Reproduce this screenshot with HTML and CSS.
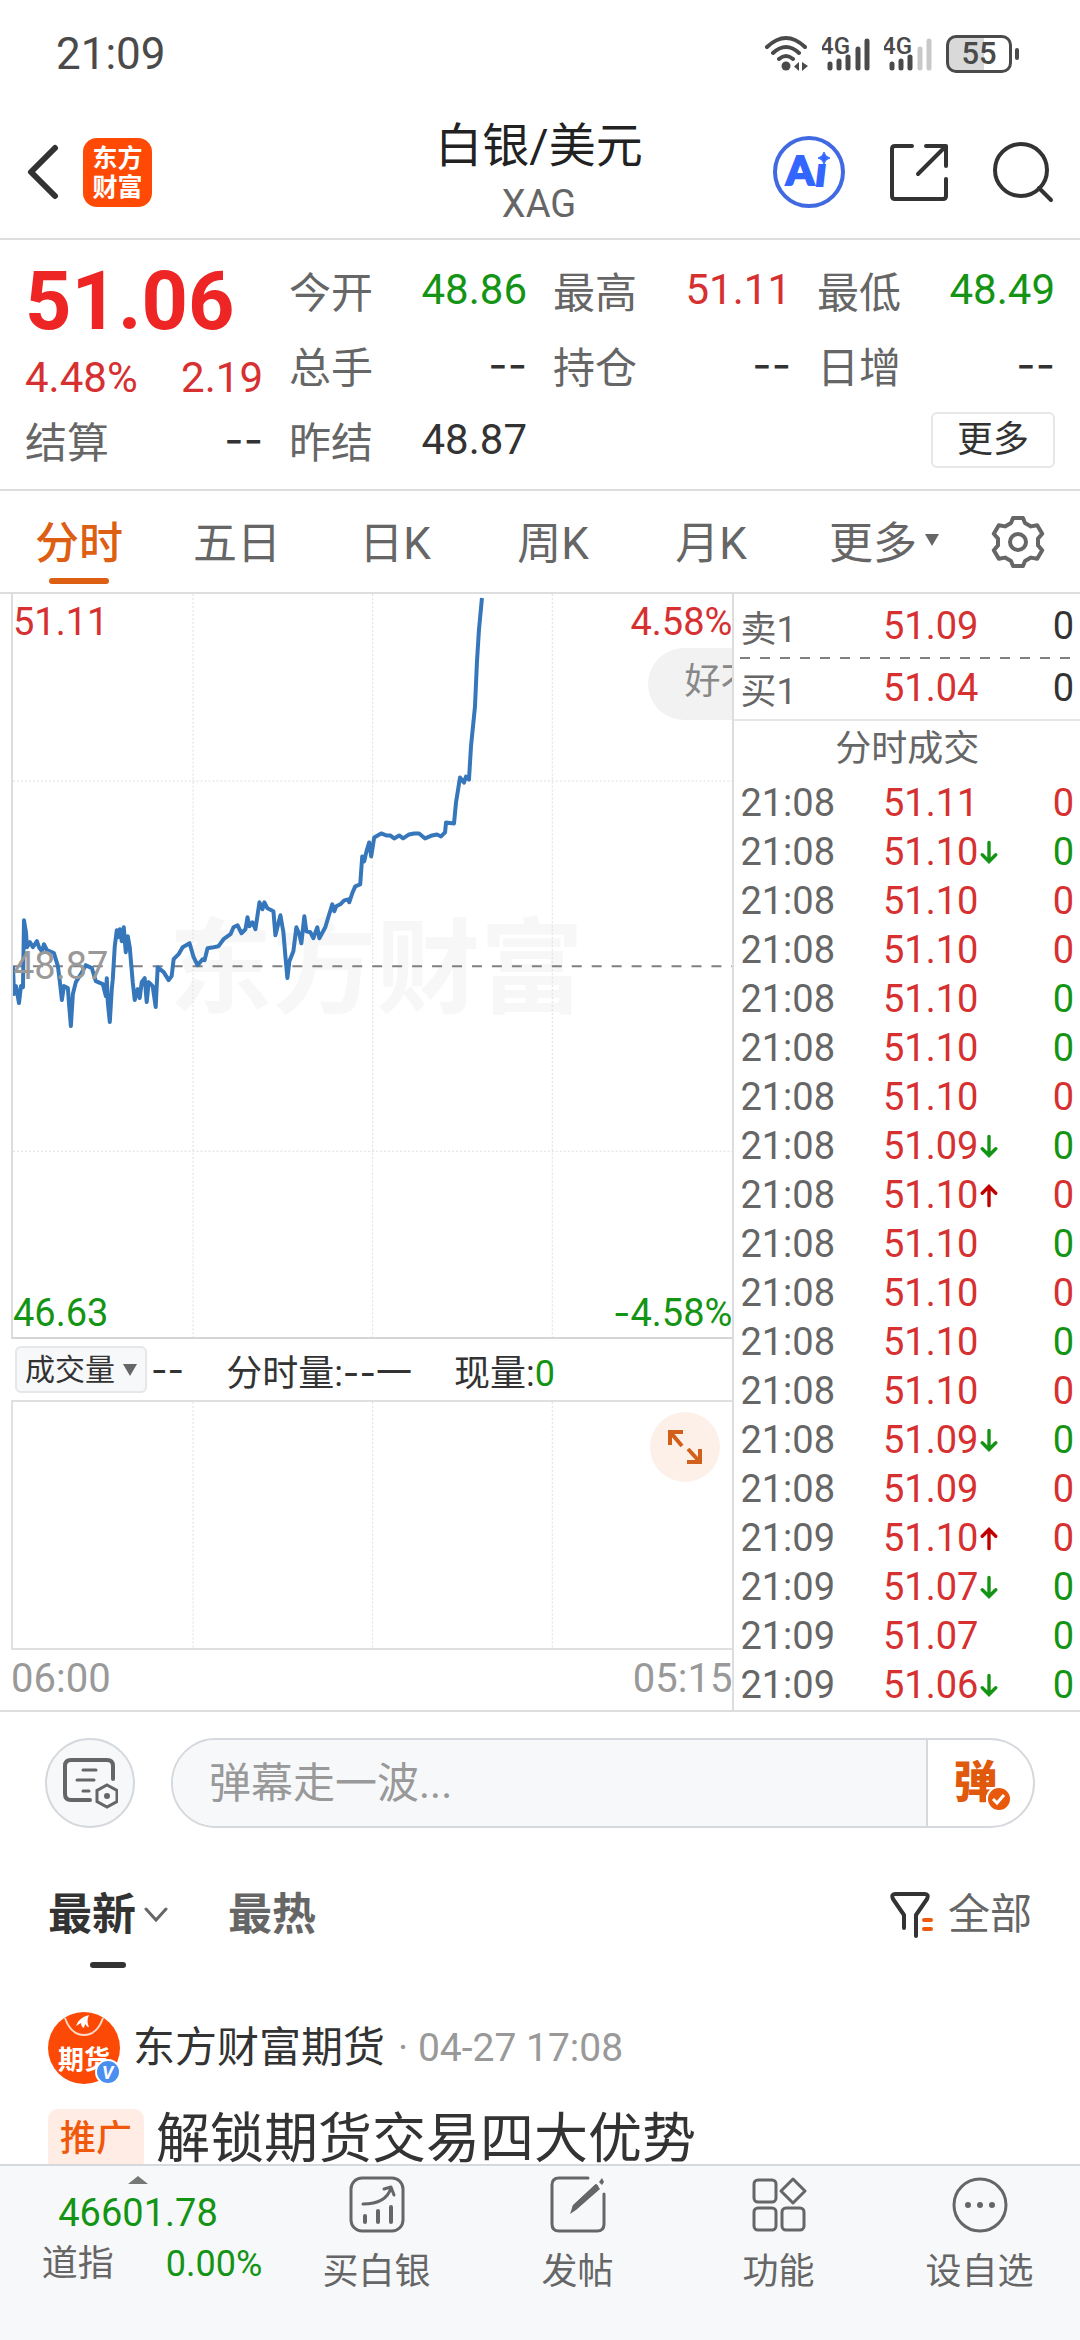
FILE: index.html
```html
<!DOCTYPE html>
<html lang="zh-CN">
<head>
    <meta charset="UTF-8">
    <meta name="viewport" content="width=device-width, initial-scale=1.0">
    <title>白银/美元 XAG</title>
    <link rel="stylesheet" href="styles.css">
</head>
<body>

    <div class="status-bar">
        <span class="clock">21:09</span>
        <div class="status-icons">
            <svg width="46" height="38" viewBox="0 0 46 38" fill="none" stroke="#4a4a4a" stroke-width="4" stroke-linecap="round">
                <path d="M3 12Q22 -6 41 12M9 18Q22 6 35 18M15 24Q22 18 29 24"/>
                <circle cx="22" cy="31" r="4.500" fill="#4a4a4a" stroke="none"/>
                <path d="M35 27v9l-5-4.500zM38 27v9l6-5z" fill="#4a4a4a" stroke="none"/>
            </svg>
            <svg width="50" height="38" viewBox="0 0 50 38" stroke="#4a4a4a" stroke-width="5" stroke-linecap="round">
                <text class="net" x="-2" y="19">4G</text>
                <path d="M8 29v4M17 26v7M26 22v11M36 14v19M45 6v27"/>
            </svg>
            <svg width="50" height="38" viewBox="0 0 50 38" stroke="#4a4a4a" stroke-width="5" stroke-linecap="round">
                <text class="net" x="-2" y="19">4G</text>
                <path d="M8 29v4M17 26v7M26 22v11"/>
                <path d="M36 14v19M45 6v27" stroke="#c9c9c9"/>
            </svg>
            <span class="battery">55</span>
        </div>
    </div>

    <header class="header">
        <div class="header-side">
            <button class="icon-btn" aria-label="返回">
                <svg width="36" height="60" viewBox="0 0 36 60" fill="none" stroke="#333" stroke-width="6" stroke-linecap="round" stroke-linejoin="round"><path d="M31 6L7 30l24 24"/></svg>
            </button>
            <a href="#" class="logo">东方<br>财富</a>
        </div>
        <div class="header-title">
            <h1>白银/美元</h1>
            <p>XAG</p>
        </div>
        <div class="header-side header-actions">
            <button class="icon-btn" aria-label="智能助手">
                <svg width="74" height="74" viewBox="0 0 74 74">
                    <circle cx="37" cy="37" r="34" fill="none" stroke="#4169e1" stroke-width="4"/>
                    <text class="ai" x="14" y="50">A</text>
                    <text class="ai ai-stem" x="44" y="51">ı</text>
                    <path d="M52 17q1 5 6 6q-5 1-6 6q-1-5-6-6q5-1 6-6z" fill="#3366ff" stroke="#3366ff"/>
                </svg>
            </button>
            <button class="icon-btn" aria-label="分享">
                <svg width="62" height="62" viewBox="0 0 62 62" fill="none" stroke="#333" stroke-width="4" stroke-linecap="round" stroke-linejoin="round">
                    <path d="M24 5H7Q4 5 4 8v47q0 3 3 3h48q3 0 3-3V38M38 5h20v20M58 5L30 33"/>
                </svg>
            </button>
            <button class="icon-btn" aria-label="搜索">
                <svg width="62" height="62" viewBox="0 0 62 62" fill="none" stroke="#333" stroke-width="4" stroke-linecap="round">
                    <circle cx="29" cy="29" r="26"/><path d="M47 47l12 12"/>
                </svg>
            </button>
        </div>
    </header>

    <section class="quote">
        <div class="quote-price">
            <strong>51.06</strong>
            <div class="quote-change"><span>4.48%</span><span>2.19</span></div>
        </div>
        <div class="quote-item"><span>今开</span><b class="down">48.86</b></div>
        <div class="quote-item"><span>最高</span><b class="up">51.11</b></div>
        <div class="quote-item"><span>最低</span><b class="down">48.49</b></div>
        <div class="quote-item"><span>总手</span><b class="dash">--</b></div>
        <div class="quote-item"><span>持仓</span><b class="dash">--</b></div>
        <div class="quote-item"><span>日增</span><b class="dash">--</b></div>
        <div class="quote-item"><span>结算</span><b class="dash">--</b></div>
        <div class="quote-item"><span>昨结</span><b>48.87</b></div>
        <button class="more-btn">更多</button>
    </section>

    <nav class="period-tabs">
        <a href="#" class="active">分时</a>
        <a href="#">五日</a>
        <a href="#">日K</a>
        <a href="#">周K</a>
        <a href="#">月K</a>
        <a href="#">更多<i class="caret"></i></a>
        <button class="icon-btn" aria-label="设置">
            <svg width="56" height="56" viewBox="-28 -28 56 56" fill="none" stroke="#666" stroke-width="4" stroke-linejoin="round">
                <path d="M-5-24L5-24L7-19L13-15.600L19.200-16.800L24.200-8.200L20-3.400L20 3.400L24.200 8.200L19.200 16.800L13 15.600L7 19L5 24L-5 24L-7 19L-13 15.600L-19.200 16.800L-24.200 8.200L-20 3.400L-20-3.400L-24.200-8.200L-19.200-16.800L-13-15.600L-7-19Z"/>
                <circle r="8"/>
            </svg>
        </button>
    </nav>

    <main class="market">
        <div class="charts">
            <div class="chart">
                <svg viewBox="0 0 721 745" fill="none">
                    <text class="watermark" x="156" y="412">东方财富</text>
                    <path d="M180.500 0V745M360.500 0V745M540.500 0V745M0 187.500H721M0 558.500H721" stroke="#ddd" stroke-dasharray="2 2"/>
                    <path d="M0 373H721" stroke="#808080" stroke-width="2" stroke-dasharray="10 10"/>
                    <path class="price-line" d="M0 373L1 401L3 393L6 410L8 393L10 394L11 327L13 339L14 354L17 349L20 354L24 348L26 354L29 358L31 351L34 357L41 360L45 373L47 389L49 407L51 393L55 395L56 409L58 433L60 401L63 389L68 381L73 372L79 375L83 388L90 391L93 403L94 385L95 409L97 429L99 396L100 386L102 353L104 337L105 344L107 336L109 348L111 334L113 359L115 343L117 354L120 389L122 407L125 396L127 405L129 389L132 385L134 409L136 389L140 393L143 414L145 374L151 379L156 387L159 383L161 366L166 361L170 354L177 350L181 364L185 372L190 366L192 367L195 355L201 354L206 353L211 346L218 341L221 334L225 332L229 340L233 336L235 324L237 333L240 329L243 336L247 309L250 316L252 309L255 315L261 318L263 342L268 322L271 339L273 363L275 385L277 368L281 358L284 334L287 341L289 350L292 323L294 338L298 339L301 345L305 334L307 345L313 334L316 324L320 311L322 318L324 313L328 311L332 307L336 306L337 309L340 300L343 293L348 291L350 263L352 268L354 259L357 249L359 263L362 244L369 240L374 242L378 242L382 245L387 242L391 245L397 241L402 240L407 240L413 245L420 242L425 241L429 243L433 239L434 229L442 230L444 209L448 184L452 189L454 183L457 186L459 153L463 113L465 68L467 36L470 4"/>
                </svg>
                <span class="mark top-left up">51.11</span>
                <span class="mark top-right up">4.58%</span>
                <span class="mark mid-left">48.87</span>
                <span class="mark bottom-left down">46.63</span>
                <span class="mark bottom-right down"><span class="dash">-</span>4.58%</span>
                <span class="bullet">好不</span>
            </div>
            <div class="volume-bar">
                <label class="volume-select">
                    <select aria-label="指标"><option>成交量</option></select>
                    <i class="caret"></i>
                </label>
                <span class="dash">--</span>
                <span class="volume-now">分时量:<span class="dash">--</span>一</span>
                <span>现量:<span class="down">0</span></span>
            </div>
            <div class="volume-chart">
                <svg viewBox="0 0 721 246" fill="none">
                    <path d="M180.500 0V246M360.500 0V246M540.500 0V246" stroke="#ddd" stroke-dasharray="2 2"/>
                </svg>
                <button class="expand-btn" aria-label="全屏">
                    <svg width="36" height="36" viewBox="0 0 36 36" fill="none" stroke="#d2601a" stroke-width="4"><path d="M3 16V3h13M4 4l11 13M33 20v13H20M32 32L21 20"/></svg>
                </button>
            </div>
            <div class="time-axis"><span>06:00</span><span>05:15</span></div>
        </div>

        <div class="trades">
            <table class="book">
                <tr><th>卖1</th><td class="up">51.09</td><td>0</td></tr>
                <tr><th>买1</th><td class="up">51.04</td><td>0</td></tr>
            </table>
            <table class="ticks">
                <caption>分时成交</caption>
                <tr><td>21:08</td><td>51.11</td><td class="up">0</td></tr>
                <tr><td>21:08</td><td>51.10<svg class="arrow down"><use href="#arrow-down"/></svg></td><td class="down">0</td></tr>
                <tr><td>21:08</td><td>51.10</td><td class="up">0</td></tr>
                <tr><td>21:08</td><td>51.10</td><td class="up">0</td></tr>
                <tr><td>21:08</td><td>51.10</td><td class="down">0</td></tr>
                <tr><td>21:08</td><td>51.10</td><td class="down">0</td></tr>
                <tr><td>21:08</td><td>51.10</td><td class="up">0</td></tr>
                <tr><td>21:08</td><td>51.09<svg class="arrow down"><use href="#arrow-down"/></svg></td><td class="down">0</td></tr>
                <tr><td>21:08</td><td>51.10<svg class="arrow rise"><use href="#arrow-up"/></svg></td><td class="up">0</td></tr>
                <tr><td>21:08</td><td>51.10</td><td class="down">0</td></tr>
                <tr><td>21:08</td><td>51.10</td><td class="up">0</td></tr>
                <tr><td>21:08</td><td>51.10</td><td class="down">0</td></tr>
                <tr><td>21:08</td><td>51.10</td><td class="up">0</td></tr>
                <tr><td>21:08</td><td>51.09<svg class="arrow down"><use href="#arrow-down"/></svg></td><td class="down">0</td></tr>
                <tr><td>21:08</td><td>51.09</td><td class="up">0</td></tr>
                <tr><td>21:09</td><td>51.10<svg class="arrow rise"><use href="#arrow-up"/></svg></td><td class="up">0</td></tr>
                <tr><td>21:09</td><td>51.07<svg class="arrow down"><use href="#arrow-down"/></svg></td><td class="down">0</td></tr>
                <tr><td>21:09</td><td>51.07</td><td class="down">0</td></tr>
                <tr><td>21:09</td><td>51.06<svg class="arrow down"><use href="#arrow-down"/></svg></td><td class="down">0</td></tr>
            </table>
        </div>
    </main>

    <form class="danmu">
        <button type="button" class="danmu-set" aria-label="弹幕设置">
            <svg width="56" height="52" viewBox="0 0 56 52" fill="none" stroke="#666" stroke-width="4" stroke-linecap="round">
                <path d="M51 22V9q0-6-6-6H9Q3 3 3 9v28q0 6 6 6h19"/>
                <path d="M21 13h13M15 23h17M21 34h6" stroke-width="3"/>
                <path d="M45 28l10 5.500v11L45 50l-10-5.500v-11z" stroke-width="3"/>
                <circle cx="45" cy="39" r="3" fill="#666" stroke="none"/>
            </svg>
        </button>
        <div class="danmu-box">
            <input type="text" placeholder="弹幕走一波..." aria-label="弹幕">
            <button type="button" class="danmu-toggle" aria-label="弹幕开关">弹
                <svg width="26" height="26" viewBox="0 0 26 26"><circle cx="13" cy="13" r="12" fill="#e8590c" stroke="#fff" stroke-width="2"/><path d="M7 13l4 4 7-8" fill="none" stroke="#fff" stroke-width="3"/></svg>
            </button>
        </div>
    </form>

    <div class="feed-tabs">
        <a href="#" class="active">最新<svg width="24" height="16" viewBox="0 0 24 16" fill="none" stroke="#666" stroke-width="3" stroke-linecap="round"><path d="M2 2l10 11L22 2"/></svg></a>
        <a href="#">最热</a>
        <a href="#" class="filter">
            <svg width="44" height="48" viewBox="0 0 44 48" fill="none" stroke="#333" stroke-width="4" stroke-linecap="round" stroke-linejoin="round">
                <path d="M14 37V24L3 8Q1 3 5 3h30q4 0 2 5L26 24v21"/>
                <path d="M34 29h7M34 38h7" stroke="#f0590c"/>
            </svg>全部
        </a>
    </div>

    <article class="post">
        <div class="post-author">
            <span class="avatar">
                <svg width="72" height="72" viewBox="0 0 72 72">
                    <circle cx="36" cy="36" r="36" fill="#fc4a06"/>
                    <path d="M17 6q6 17 19 17T55 6" fill="none" stroke="#ffd9c8" stroke-width="2"/>
                    <path d="M41 3q-11 3-13 11l5-3q0 4 3 5q0-3 2-4q0 3 3 3q-3-6 0-12z" fill="#fff"/>
                    <text class="avatar-text" x="10" y="57">期货</text>
                    <circle cx="60" cy="60" r="12" fill="#4a8ef0" stroke="#fff" stroke-width="2"/>
                    <text class="avatar-v" x="54" y="67">V</text>
                </svg>
            </span>
            <span class="post-name">东方财富期货</span>
            <time>· 04-27 17:08</time>
        </div>
        <h2><span class="tag">推广</span>解锁期货交易四大优势</h2>
    </article>

    <footer class="bottom-nav">
        <a href="#" class="index">
            <i class="caret-up"></i>
            <span class="down">46601.78</span>
            <span class="index-row">道指<b class="down">0.00%</b></span>
        </a>
        <a href="#">
            <svg width="56" height="58" viewBox="0 0 56 58" fill="none" stroke="#666" stroke-width="3" stroke-linecap="round" stroke-linejoin="round">
                <rect x="2" y="2" width="52" height="53" rx="11"/>
                <path d="M14 28q23 0 28-16M35 13l7-2 3 8"/>
                <path d="M16 40v6M29 35v11M42 31v15" stroke-width="4"/>
            </svg>
            买白银
        </a>
        <a href="#">
            <svg width="56" height="58" viewBox="0 0 56 58" fill="none" stroke="#666" stroke-width="3" stroke-linecap="round">
                <path d="M38 2H9Q2 2 2 9v39q0 7 7 7h38q7 0 7-7V18"/>
                <path d="M20 38l3-9L46 8l4 5L26 34zM49 6l3-4 2 4-2 3z" fill="#666" stroke="none"/>
                <path d="M25 31L46 11" stroke-width="5"/>
            </svg>
            发帖
        </a>
        <a href="#">
            <svg width="56" height="58" viewBox="0 0 56 58" fill="none" stroke="#666" stroke-width="3" stroke-linejoin="round">
                <rect x="3" y="4" width="22" height="22" rx="4"/>
                <rect x="3" y="32" width="22" height="22" rx="4"/>
                <rect x="31" y="32" width="22" height="22" rx="4"/>
                <path d="M42 3l12 12-12 12-12-12z"/>
            </svg>
            功能
        </a>
        <a href="#">
            <svg width="56" height="58" viewBox="0 0 56 58" fill="none" stroke="#666" stroke-width="3">
                <circle cx="28" cy="29" r="26"/>
                <path d="M16 29h0M28 29h0M40 29h0" stroke-width="6" stroke-linecap="round"/>
            </svg>
            设自选
        </a>
    </footer>

    <!-- shared arrows of the trade list -->
    <svg width="0" height="0" class="defs">
        <symbol id="arrow-down" viewBox="0 0 16 22"><path d="M8 2v17M2 13l6 6 6-6"/></symbol>
        <symbol id="arrow-up" viewBox="0 0 16 22"><path d="M8 20V3M2 9l6-6 6 6"/></symbol>
    </svg>

</body>
</html>
```

FILE: styles.css
```css
* {
    margin: 0;
    padding: 0;
    box-sizing: border-box;
}

body {
    font-family: Roboto, "Noto Sans CJK SC", sans-serif;
    background: #fff;
    color: #333;
    font-size: 36px;
}

a {
    color: inherit;
    text-decoration: none;
}

button,
input,
select {
    font: inherit;
    color: inherit;
    background: none;
    border: none;
}

svg {
    display: block;
    flex: none;
}

.defs {
    position: absolute;
}

.icon-btn {
    display: flex;
}

.up {
    color: #d63031;
}

.down {
    color: #149414;
}

.dash {
    font-family: Inter, sans-serif;
}

.caret {
    border: 7px solid transparent;
    border-top: 12px solid #666;
    border-bottom: 0;
}

/* status bar */
.status-bar {
    display: flex;
    justify-content: space-between;
    align-items: center;
    height: 104px;
    padding: 4px 68px 0 56px;
    color: #4a4a4a;
}

.clock {
    font-size: 44px;
}

.status-icons {
    display: flex;
    align-items: center;
    gap: 12px;
}

.net {
    font-size: 24px;
    font-weight: 500;
    fill: #4a4a4a;
    stroke: none;
}

.battery {
    position: relative;
    width: 66px;
    height: 38px;
    border: 3px solid #4a4a4a;
    border-radius: 10px;
    background: linear-gradient(90deg, #d9d9d9 58%, #fff 58%);
    font-size: 31px;
    font-weight: 500;
    line-height: 32px;
    text-align: center;
}

.battery::after {
    content: "";
    position: absolute;
    right: -10px;
    top: 10px;
    width: 4px;
    height: 12px;
    border-radius: 2px;
    background: #4a4a4a;
}

/* header */
.header {
    display: grid;
    grid-template-columns: 1fr auto 1fr;
    align-items: center;
    height: 136px;
    padding: 2px 26px 0 24px;
    border-bottom: 2px solid #ddd;
}

.header-side {
    display: flex;
    align-items: center;
    gap: 23px;
}

.header-actions {
    justify-content: flex-end;
    gap: 42px;
}

.logo {
    width: 69px;
    height: 69px;
    padding-top: 6px;
    border-radius: 14px;
    background: #ff4a05;
    color: #fff;
    font-size: 25px;
    font-weight: 700;
    line-height: 29px;
    text-align: center;
}

.header-title {
    text-align: center;
}

.header-title h1 {
    font-size: 47px;
    font-weight: 400;
    line-height: 64px;
    color: #222;
}

.header-title p {
    font-size: 38px;
    line-height: 52px;
    color: #666;
}

.ai {
    font-family: Lato, sans-serif;
    font-size: 40px;
    font-weight: 900;
    fill: #3366ff;
    stroke: #3366ff;
    stroke-width: 2;
}

.ai-stem {
    font-style: italic;
}

/* quote */
.quote {
    display: grid;
    grid-template-columns: repeat(4, 1fr);
    grid-auto-rows: 75px;
    column-gap: 26px;
    padding: 12px 25px;
    border-bottom: 2px solid #ddd;
    font-size: 42px;
}

.quote-price {
    grid-row: span 2;
    color: #ee2525;
}

.quote-price strong {
    display: block;
    font-size: 81px;
    font-weight: 700;
    line-height: 100px;
}

.quote-change {
    display: flex;
    justify-content: space-between;
    line-height: 52px;
    color: #d63031;
}

.quote-item {
    display: flex;
    justify-content: space-between;
    align-items: center;
    color: #666;
}

.quote-item b {
    font-weight: 400;
}

.quote-item b:not(.up):not(.down) {
    color: #333;
}

.more-btn {
    grid-column: 4;
    justify-self: end;
    align-self: center;
    width: 124px;
    height: 56px;
    border: 2px solid #e5e7e9;
    border-radius: 6px;
    font-size: 36px;
    line-height: 48px;
}

/* period tabs */
.period-tabs {
    display: grid;
    grid-template-columns: repeat(5, 158fr) 188fr 102fr;
    align-items: center;
    height: 103px;
    border-bottom: 2px solid #ddd;
    color: #666;
    font-size: 44px;
}

.period-tabs a {
    position: relative;
    display: flex;
    justify-content: center;
    align-items: center;
    gap: 8px;
    height: 100%;
    padding-bottom: 4px;
}

.period-tabs .icon-btn {
    padding-left: 12px;
}

.period-tabs .active {
    color: #dc5f14;
    font-weight: 500;
}

.period-tabs .active::after {
    content: "";
    position: absolute;
    bottom: 8px;
    width: 60px;
    height: 6px;
    border-radius: 3px;
    background: #dc5f14;
}

/* charts */
.market {
    display: grid;
    grid-template-columns: 68% 32%;
    border-bottom: 2px solid #ddd;
}

.charts {
    padding-left: 11px;
    border-right: 2px solid #ddd;
}

.chart {
    position: relative;
    overflow: hidden;
    border-left: 2px solid #ddd;
    border-bottom: 2px solid #d5d5d5;
}

.chart svg,
.volume-chart > svg {
    width: 100%;
    height: auto;
}

.watermark {
    font-size: 104px;
    font-weight: 700;
    fill: #f7f7f7;
}

.price-line {
    stroke: #3676ba;
    stroke-width: 4;
    stroke-linejoin: round;
}

.mark {
    position: absolute;
    font-size: 38px;
    line-height: 48px;
}

.top-left {
    top: 4px;
    left: 0;
}

.top-right {
    top: 4px;
    right: 0;
}

.mid-left {
    top: 50%;
    left: 0;
    transform: translateY(-50%);
    color: #999;
}

.bottom-left {
    bottom: 0;
    left: 0;
}

.bottom-right {
    bottom: 0;
    right: 0;
}

/* running comment, cut by the chart edge */
.bullet {
    position: absolute;
    top: 54px;
    right: -24px;
    height: 72px;
    padding: 0 0 0 36px;
    border-radius: 36px 0 0 36px;
    background: #f2f2f2;
    color: #888;
    line-height: 68px;
}

.volume-bar {
    display: flex;
    align-items: center;
    gap: 4px;
    height: 61px;
    padding-left: 4px;
}

.volume-now {
    margin: 0 38px;
}

.volume-select {
    display: flex;
    align-items: center;
    gap: 8px;
    height: 47px;
    padding: 0 8px;
    border: 2px solid #e5e7e9;
    border-radius: 6px;
    background: #f7f8fa;
    font-size: 30px;
}

.volume-select select {
    appearance: none;
}

.volume-chart {
    position: relative;
    border: 2px solid #e0e0e0;
    border-right: 0;
}

.expand-btn {
    position: absolute;
    top: 10px;
    right: 12px;
    display: flex;
    justify-content: center;
    align-items: center;
    width: 70px;
    height: 70px;
    border-radius: 50%;
    background: #fdf0e9;
}

.time-axis {
    display: flex;
    justify-content: space-between;
    color: #999;
    font-size: 40px;
    line-height: 58px;
}

/* trade list */
.trades {
    font-size: 38px;
}

.trades table {
    width: 100%;
    border-collapse: collapse;
    table-layout: fixed;
}

.trades th,
.trades td {
    text-align: left;
    font-weight: 400;
}

.trades th:first-child,
.trades td:first-child {
    width: 43%;
    padding-left: 6px;
    color: #666;
}

.trades td:last-child {
    width: 15%;
    padding-right: 6px;
    text-align: right;
}

.book {
    border-bottom: 2px solid #e5e5e5;
}

.book tr {
    height: 63px;
}

.book th {
    font-size: 36px;
}

.book tr + tr {
    background: repeating-linear-gradient(90deg, #808080 0 10px, transparent 10px 20px) 6px 0 / 332px 2px no-repeat;
}

.ticks caption {
    height: 58px;
    color: #666;
    font-size: 36px;
    line-height: 56px;
}

.ticks tr {
    height: 49px;
}

.ticks td {
    line-height: 49px;
}

.ticks td:nth-child(2) {
    color: #d63031;
}

.arrow {
    display: inline-block;
    width: 18px;
    height: 25px;
    margin-left: 2px;
    fill: none;
    stroke: currentColor;
    stroke-width: 3;
    stroke-linecap: round;
}

.rise {
    color: #c00000;
}

/* comment box */
.danmu {
    display: flex;
    gap: 36px;
    padding: 26px 45px 28px;
}

.danmu-set {
    display: flex;
    justify-content: center;
    align-items: center;
    width: 90px;
    height: 90px;
    border: 2px solid #d5d8dc;
    border-radius: 50%;
    background: #f7f8fa;
}

.danmu-box {
    display: flex;
    flex: 1;
    height: 90px;
    border: 2px solid #d5d8dc;
    border-radius: 45px;
    overflow: hidden;
}

.danmu-box input {
    flex: 1;
    min-width: 0;
    padding: 0 36px;
    background: #f7f8fa;
    font-size: 42px;
}

.danmu-box input::placeholder {
    color: #999;
}

.danmu-toggle {
    position: relative;
    width: 107px;
    padding-right: 10px;
    border-left: 2px solid #d5d8dc;
    color: #e0590c;
    font-size: 44px;
    font-weight: 900;
    line-height: 80px;
}

.danmu-toggle svg {
    position: absolute;
    left: 58px;
    top: 46px;
}

/* feed */
.feed-tabs {
    display: flex;
    align-items: center;
    gap: 60px;
    padding: 0 48px;
    color: #666;
    font-size: 44px;
    font-weight: 700;
    line-height: 118px;
}

.feed-tabs a {
    position: relative;
    display: flex;
    align-items: center;
    gap: 8px;
}

.feed-tabs .active {
    color: #333;
}

.feed-tabs .active::after {
    content: "";
    position: absolute;
    left: 42px;
    bottom: 6px;
    width: 36px;
    height: 6px;
    border-radius: 3px;
    background: #333;
}

.feed-tabs .filter {
    gap: 14px;
    margin-left: auto;
    font-size: 42px;
    font-weight: 400;
}

.post {
    padding: 38px 48px 150px;
}

.post-author {
    display: flex;
    align-items: center;
    gap: 13px;
    line-height: 68px;
}

.avatar-text {
    font-size: 26px;
    font-weight: 700;
    fill: #fff;
}

.avatar-v {
    font-size: 18px;
    font-style: italic;
    font-weight: 700;
    fill: #fff;
}

.post-name {
    font-size: 42px;
}

.post time {
    color: #999;
    font-size: 39px;
}

.post h2 {
    display: flex;
    align-items: center;
    gap: 12px;
    margin-top: 20px;
    font-size: 54px;
    font-weight: 400;
    line-height: 72px;
}

.tag {
    height: 62px;
    padding: 0 12px;
    border-radius: 10px;
    background: #ffede5;
    color: #f0590c;
    font-size: 36px;
    font-weight: 500;
    line-height: 60px;
}

/* bottom nav */
.bottom-nav {
    position: fixed;
    left: 0;
    right: 0;
    bottom: 0;
    display: grid;
    grid-template-columns: 276fr repeat(4, 201fr);
    height: 176px;
    border-top: 2px solid #d5d8dc;
    background: #f7f8fa;
    color: #666;
}

.bottom-nav a {
    display: flex;
    flex-direction: column;
    align-items: center;
    gap: 12px;
    padding-top: 10px;
    line-height: 52px;
}

.bottom-nav .index {
    gap: 7px;
    font-size: 38px;
    line-height: 44px;
}

.caret-up {
    border: 10px solid transparent;
    border-top: 0;
    border-bottom: 8px solid #777;
}

.index-row {
    display: flex;
    gap: 52px;
    padding-left: 28px;
    font-size: 36px;
}

.index-row b {
    font-weight: 400;
}
```
